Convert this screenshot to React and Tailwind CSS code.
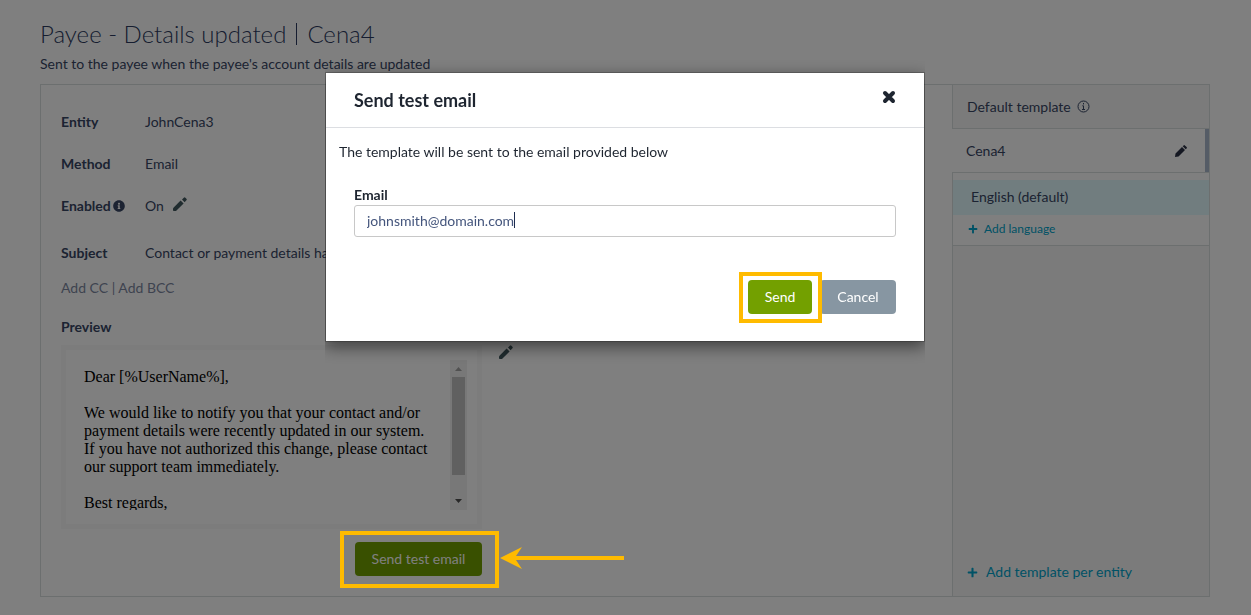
import { useState } from 'react'
import { FaInfoCircle, FaPlus } from 'react-icons/fa'

const DETAILS = [
  { label: 'Entity', value: 'JohnCena3' },
  { label: 'Method', value: 'Email' },
  { label: 'Enabled', value: 'On', info: true, editable: true },
]

export default function App() {
  return (
    <div className="min-h-screen bg-white pl-10 pr-[41px] pt-5 pb-4 font-['Lato',sans-serif] text-sm text-[#384664]">
      <header>
        <h1 className="text-2xl leading-7 flex items-center h-7 font-light text-[#2c3a60]">
          Payee - Details updated
          <span className="w-px h-[22px] mx-[10px] bg-current" />
          Cena4
        </h1>
        <p className="leading-5 mt-1.5 mb-2.5">Sent to the payee when the payee's account details are updated</p>
      </header>
      <main className="flex border border-[#d8dede]">
        <TemplateDetails />
        <TemplateList />
      </main>
      <SendTestModal />
    </div>
  )
}

function Pencil() {
  return (
    <svg viewBox="0 0 14 14" className="w-[14px] h-[14px]" fill="currentColor">
      <path d="M0 11.200L7.600 3.400L10.600 6.400L3 14H0.800Q0 14 0 13.200Z" />
      <path d="M9 2.600L10.800 0.700Q11.600 0 12.400 0.700L13.400 1.700Q14.200 2.500 13.400 3.300L11.600 5.200Z" />
    </svg>
  )
}

function Row({ label, info, children }) {
  return (
    <div className="flex leading-5">
      <dt className="w-[84px] flex-shrink-0 flex items-center gap-0.5 font-bold">
        {label}
        {info && <FaInfoCircle className="w-3 h-3" />}
      </dt>
      <dd className="flex items-center gap-[9px]">{children}</dd>
    </div>
  )
}

function TemplateDetails() {
  return (
    <section className="flex-1 min-w-0 px-5 pt-[27px] pb-5">
      <dl className="flex flex-col gap-[22px]">
        {DETAILS.map((d) => (
          <Row key={d.label} label={d.label} info={d.info}>
            {d.value}
            {d.editable && (
              <button aria-label="Edit enabled" className="pb-1 text-[#40585e]"><Pencil /></button>
            )}
          </Row>
        ))}
      </dl>
      <dl className="mt-[27px]">
        <Row label="Subject">Contact or payment details have been updated</Row>
      </dl>
      <div className="mt-[15px] leading-5 text-[#7c879f]">
        <a href="#cc">Add CC</a> | <a href="#bcc">Add BCC</a>
      </div>
      <h2 className="mt-[19px] leading-5 font-bold">Preview</h2>

      <div className="mt-2 flex items-start gap-[17px]">
        <div className="w-[421px] h-[184px] border-[5px] border-[#f8f8f8] pt-[10px] pl-[18px] pr-[10px] flex">
          <div className="flex-1 h-[150px] overflow-hidden pt-2 pr-4 font-['Liberation_Serif',serif] text-base leading-[18px] text-black">
            <p>Dear [%UserName%],</p>
            <p className="mt-[18px]">
              We would like to notify you that your contact and/or payment details were recently updated in our system.
              If you have not authorized this change, please contact our support team immediately.
            </p>
            <p className="mt-[18px]">Best regards,</p>
          </div>
          <div className="w-[17px] h-[150px] bg-[#f1f1f1] flex flex-col items-center">
            <svg viewBox="0 0 17 17" className="w-[17px] h-[17px]"><path d="M5 11h7L8.500 7z" fill="#a3a3a3" /></svg>
            <div className="w-[13px] h-[98px] bg-[#c1c1c1]" />
            <svg viewBox="0 0 17 17" className="w-[17px] h-[17px] mt-auto"><path d="M5 6h7L8.500 10z" fill="#505050" /></svg>
          </div>
        </div>
        <button aria-label="Edit preview" className="text-[#40585e]"><Pencil /></button>
      </div>

      <div className="w-[421px] mt-[13px] flex justify-end">
        <div className="relative">
          <button className="block h-[34px] w-[127px] rounded bg-[#73a000] text-white">Send test email</button>
          <div className="absolute z-20 -top-[11px] -bottom-3 -left-[15px] -right-[17px] border-4 border-[#ffbb00]" />
          <svg viewBox="0 0 124 22" className="absolute z-20 left-full top-[5px] ml-[18px] w-[124px] h-[22px]">
            <path d="M0 11L22 0L16 9H124V13H16L22 22Z" fill="#ffbb00" />
          </svg>
        </div>
      </div>
    </section>
  )
}

function TemplateList() {
  return (
    <aside className="w-[257px] flex-shrink-0 flex flex-col bg-[#f6f6f6] leading-5">
      <div className="h-11 pl-[14px] flex items-center gap-1.5 border-l border-b border-[#d8dede]">
        Default template
        <svg viewBox="0 0 13 13" className="w-[13px] h-[13px]" fill="none" stroke="currentColor">
          <circle cx="6.500" cy="6.500" r="5.500" />
          <path d="M6.500 3v1.400M5.300 5.800H6.500V9.500M5 9.500H8" />
        </svg>
      </div>
      <div className="h-11 pl-[14px] flex items-center justify-between bg-white border-b border-[#d8dede]">
        Cena4
        <div className="flex items-center self-stretch gap-[18px]">
          <button aria-label="Edit Cena4" className="text-[#2a3044]">
            <svg viewBox="0 0 12 12" className="w-3 h-3" fill="currentColor">
              <path d="M0.500 8.500L7 2L10 5L3.500 11.500L0 12ZM7.700 1.300L8.600 0.400Q9.200 -0.200 9.900 0.400L11.600 2.100Q12.200 2.800 11.600 3.400L10.700 4.300Z" />
            </svg>
          </button>
          <div className="w-1 self-stretch bg-[#aab8cc]" />
        </div>
      </div>
      <div className="pt-[7px] bg-white border-l border-b border-[#d8dede]">
        <div className="h-[35px] pl-[18px] pb-px flex items-center bg-[#e2fafe]">English (default)</div>
        <a href="#language" className="h-[30px] pl-[15px] pb-0.5 flex items-center gap-1.5 text-xs text-[#00a4cc]">
          <FaPlus className="w-[10px] h-[10px]" />
          Add language
        </a>
      </div>
      <div className="flex-1 flex items-end border-l border-[#d8dede]">
        <a href="#template" className="pl-[14px] pb-[14px] flex items-center gap-2 text-[#00a4cc]">
          <FaPlus className="w-[11px] h-[11px]" />
          Add template per entity
        </a>
      </div>
    </aside>
  )
}

function SendTestModal() {
  const [email, setEmail] = useState('johnsmith@domain.com')

  return (
    <div className="fixed inset-0 z-10 bg-black/50 pt-[72px] pr-px">
      {/* clips the side shadows, keeps the top and bottom ones */}
      <div className="w-[600px] mx-auto overflow-x-clip">
        <div
          role="dialog"
          aria-labelledby="modal-title"
          className="bg-white bg-clip-padding border border-black/20 shadow-[0_5px_15px_rgba(0,0,0,0.5)] text-[#1e2530]"
        >
          <div className="h-[55px] pl-7 pr-7 flex items-center justify-between border-b border-[#dcdee2]">
            <h2 id="modal-title" className="text-lg leading-6 font-bold">Send test email</h2>
            <button aria-label="Close" className="pb-1.5">
              <svg viewBox="0 0 14 14" className="w-[14px] h-[14px]" fill="none" stroke="currentColor" strokeWidth="4" strokeLinecap="round">
                <path d="M3 3L11 11M11 3L3 11" />
              </svg>
            </button>
          </div>
          <div className="px-[13px] pt-[14px] leading-5">
            <p>The template will be sent to the email provided below</p>
          </div>
          <div className="px-7 pt-[23px] pb-[27px]">
            <label htmlFor="email" className="block leading-5 font-bold">Email</label>
            <div className="relative">
              <input
                id="email"
                type="email"
                value={email}
                onChange={(e) => setEmail(e.target.value)}
                className="block w-full h-8 px-3 pb-0.5 border border-[#c8c8c8] rounded-[3px] text-[#44557c]"
              />
              <span className="absolute left-[160px] top-[7px] w-px h-4 bg-[#1e2d50]" />
            </div>
            <div className="mt-[43px] flex justify-end gap-2">
              <div className="relative z-10">
                <button className="block h-[34px] w-16 rounded bg-[#73a000] text-white">Send</button>
                <div className="absolute -top-2 -bottom-[9px] -left-[9px] -right-[10px] border-4 border-[#ffbb00]" />
              </div>
              <button className="h-[34px] w-[76px] rounded bg-[#8796a2] text-white">Cancel</button>
            </div>
          </div>
        </div>
      </div>
    </div>
  )
}
